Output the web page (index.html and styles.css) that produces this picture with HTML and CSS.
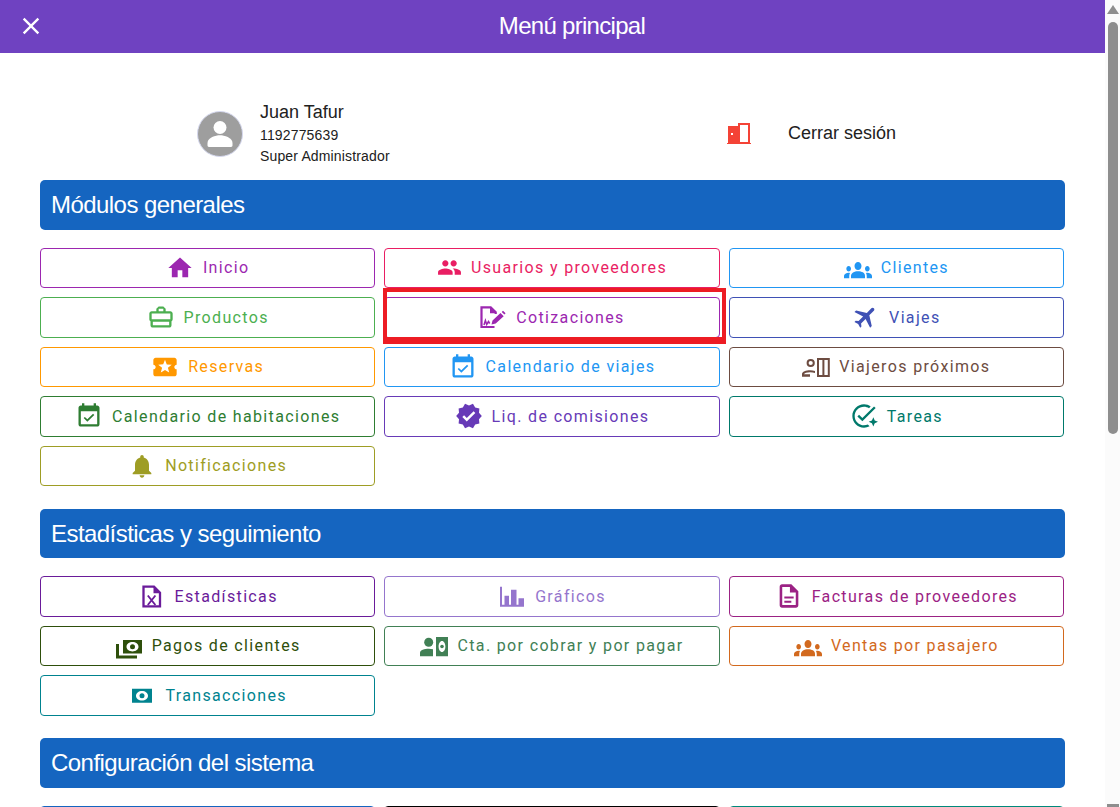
FILE: index.html
```html
<!DOCTYPE html>
<html lang="es">
<head>
<meta charset="utf-8">
<title>Menú principal</title>
<link rel="stylesheet" href="styles.css">
</head>
<body>
<div class="app">
  <div class="main">
    <header class="topbar">
      <svg class="close" viewBox="0 0 24 24"><path d="M19 6.41L17.59 5 12 10.59 6.41 5 5 6.41 10.59 12 5 17.59 6.41 19 12 13.41 17.59 19 19 17.59 13.41 12z"/></svg>
      <h1 class="topbar-title">Menú principal</h1>
    </header>
    <main class="content">
      <div class="account">
        <div class="profile">
          <svg class="avatar" viewBox="0 0 46 46"><circle cx="23" cy="23" r="22.5" fill="#9e9e9e" stroke="#d5d8ee"/><circle cx="23" cy="16.5" r="6.5" fill="#fff"/><path d="M10.5 34.5v-2.6c0-5.2 8.3-7.6 12.5-7.6s12.500 2.400 12.500 7.600v2.600c0 .8-.6 1.400-1.400 1.400H11.900c-.8 0-1.400-.6-1.400-1.400z" fill="#fff"/></svg>
          <div class="profile-text">
            <div class="profile-name">Juan Tafur</div>
            <div class="profile-line">1192775639</div>
            <div class="profile-line">Super Administrador</div>
          </div>
        </div>
        <div class="logout">
          <svg class="door" viewBox="0 0 24 21"><path fill="#f44336" d="M1 3h11v18H0v-1h1zm3 7v2h2v-2z" fill-rule="evenodd"/><path fill="#f44336" d="M11 0h12v20h1v1H11zm2 2v17h8V2z" fill-rule="evenodd"/></svg>
          <span class="logout-label">Cerrar sesión</span>
        </div>
      </div>

      <section class="section">
        <h2 class="section-title">Módulos generales</h2>
        <div class="grid">
          <a class="btn c-inicio"><svg class="ico" viewBox="0 0 24 24"><path d="M10 20v-6h4v6h5v-8h3L12 3 2 12h3v8z"/></svg><span>Inicio</span></a>
          <a class="btn c-usuarios"><svg class="ico ico-sm" viewBox="0 0 24 24"><path d="M16 11c1.660 0 2.990-1.340 2.990-3S17.660 5 16 5c-1.660 0-3 1.340-3 3s1.340 3 3 3zm-8 0c1.660 0 2.990-1.340 2.990-3S9.660 5 8 5C6.340 5 5 6.340 5 8s1.340 3 3 3zm0 2c-2.330 0-7 1.170-7 3.500V19h14v-2.500c0-2.330-4.670-3.500-7-3.500zm8 0c-.29 0-.62.02-.97.05 1.160.84 1.970 1.970 1.970 3.450V19h6v-2.500c0-2.330-4.670-3.500-7-3.500z"/></svg><span>Usuarios y proveedores</span></a>
          <a class="btn c-clientes"><svg class="ico" viewBox="0 0.2 24 20.5" preserveAspectRatio="none"><path d="M12 12.750c1.630 0 3.070.39 4.240.9 1.080.48 1.760 1.560 1.760 2.730V18H6v-1.610c0-1.180.68-2.260 1.760-2.730 1.170-.52 2.610-.91 4.240-.91zM4 13c1.100 0 2-.9 2-2s-.9-2-2-2-2 .9-2 2 .9 2 2 2zm1.130 1.100c-.37-.06-.74-.1-1.130-.1-.99 0-1.930.21-2.780.58C.48 14.900 0 15.620 0 16.430V18h4.500v-1.610c0-.83.23-1.610.63-2.290zM20 13c1.100 0 2-.9 2-2s-.9-2-2-2-2 .9-2 2 .9 2 2 2zm4 3.430c0-.81-.48-1.530-1.220-1.850-.85-.37-1.790-.58-2.780-.58-.39 0-.76.04-1.130.1.4.68.63 1.460.63 2.290V18H24v-1.570zM12 6c1.660 0 3 1.340 3 3s-1.340 3-3 3-3-1.340-3-3 1.340-3 3-3z"/></svg><span>Clientes</span></a>

          <a class="btn c-productos"><svg class="ico" viewBox="0 0 24 24"><path d="M20 7h-4V5l-2-2h-4L8 5v2H4c-1.100 0-2 .9-2 2v5c0 .75.4 1.380 1 1.730V19c0 1.110.89 2 2 2h14c1.110 0 2-.89 2-2v-3.280c.59-.35 1-.99 1-1.720V9c0-1.100-.9-2-2-2zM10 5h4v2h-4V5zM4 9h16v5H4V9zm15 10H5v-3h14v3z"/></svg><span>Productos</span></a>
          <a class="btn c-cotiz"><svg class="ico" viewBox="0 0 28 28"><path d="M15.500 24H2.500V4.300h9.200l5 5V11" fill="none" stroke="currentColor" stroke-width="2.200"/><path d="M11 3.800l6.500 6.500H11z"/><path d="M5 22l1.400-4.500 1.300 4 1.800-3 1.200 2" fill="none" stroke="currentColor" stroke-width="1.500"/><path d="M12.500 21.500l1-4 8-7.500 3.200 3.200-8 7.300zM22.700 8.900l1.300-1.200 2.600 2.600-1.200 1.300z"/></svg><span>Cotizaciones</span></a>
          <a class="btn c-viajes"><svg class="ico" viewBox="0 0 24 24"><path transform="rotate(45 12 12)" d="M21 16v-2l-8-5V3.500c0-.83-.67-1.500-1.500-1.500S10 2.670 10 3.500V9l-8 5v2l8-2.500V19l-2 1.500V22l3.500-1 3.500 1v-1.500L13 19v-5.500l8 2.500z"/></svg><span>Viajes</span></a>

          <a class="btn c-reservas"><svg class="ico" viewBox="0 0 24 24"><path d="M20 12c0-1.100.9-2 2-2V6c0-1.100-.9-2-2-2H4c-1.100 0-1.990.9-1.990 2v4c1.100 0 1.990.9 1.990 2s-.89 2-2 2v4c0 1.100.9 2 2 2h16c1.100 0 2-.9 2-2v-4c-1.100 0-2-.9-2-2zm-4.420 4.800L12 14.500l-3.580 2.300 1.080-4.120-3.290-2.690 4.240-.25L12 5.800l1.540 3.950 4.240.25-3.290 2.690 1.090 4.110z"/></svg><span>Reservas</span></a>
          <a class="btn c-calviajes"><svg class="ico" viewBox="0 0 24 24"><path d="M16.530 11.060L15.470 10l-4.880 4.880-2.120-2.120-1.060 1.060L10.590 17l5.940-5.940zM19 3h-1V1h-2v2H8V1H6v2H5c-1.110 0-1.990.9-1.990 2L3 19c0 1.100.89 2 2 2h14c1.100 0 2-.9 2-2V5c0-1.100-.9-2-2-2zm0 16H5V8h14v11z"/></svg><span>Calendario de viajes</span></a>
          <a class="btn c-viajeros"><svg class="ico" viewBox="0 0 28 28"><circle cx="8.700" cy="10" r="3.100" fill="none" stroke="currentColor" stroke-width="2"/><path d="M0 23.700v-2.700c0-2.500 4-3.800 8-3.800 1.800 0 3.500.3 5 .9v2c-1.500-.6-3.200-.9-5-.9-3 0-5.800.8-6 2h6v2.500z"/><path d="M16 6h10.800v17H16zM21.400 6v17" fill="none" stroke="currentColor" stroke-width="2"/></svg><span>Viajeros próximos</span></a>

          <a class="btn c-calhab"><svg class="ico" viewBox="0 0 24 24"><path d="M16.530 11.060L15.470 10l-4.880 4.880-2.120-2.120-1.060 1.060L10.590 17l5.940-5.940zM19 3h-1V1h-2v2H8V1H6v2H5c-1.110 0-1.990.9-1.990 2L3 19c0 1.100.89 2 2 2h14c1.100 0 2-.9 2-2V5c0-1.100-.9-2-2-2zm0 16H5V8h14v11z"/></svg><span>Calendario de habitaciones</span></a>
          <a class="btn c-liq"><svg class="ico" viewBox="0 0 24 24"><path d="M23 12l-2.440-2.790.34-3.690-3.610-.82-1.890-3.200L12 2.960 8.600 1.500 6.710 4.690 3.100 5.500l.34 3.700L1 12l2.440 2.790-.34 3.700 3.610.82L8.600 22.500l3.400-1.470 3.400 1.460 1.890-3.190 3.610-.82-.34-3.690L23 12zm-12.910 4.720l-3.800-3.810 1.480-1.480 2.320 2.330 5.850-5.870 1.480 1.480-7.330 7.350z"/></svg><span>Liq. de comisiones</span></a>
          <a class="btn c-tareas"><svg class="ico" viewBox="0 0 24 24"><path d="M22 5.180L10.590 16.600l-4.240-4.240 1.410-1.410 2.830 2.830 10-10L22 5.180zM12 20c-4.410 0-8-3.590-8-8s3.590-8 8-8c1.570 0 3.040.46 4.280 1.250l1.450-1.450C16.100 2.670 14.130 2 12 2 6.480 2 2 6.480 2 12s4.480 10 10 10c1.730 0 3.360-.44 4.780-1.220l-1.500-1.500c-1 .46-2.110.72-3.280.72z"/><path d="M20 13l1.200 2.800L24 17l-2.800 1.200L20 21l-1.200-2.800L16 17l2.800-1.200z"/></svg><span>Tareas</span></a>

          <a class="btn c-notif"><svg class="ico" viewBox="0 0 24 24"><path d="M12 22c1.100 0 2-.9 2-2h-4c0 1.100.9 2 2 2zm6-6v-5c0-3.070-1.630-5.640-4.500-6.320V4c0-.83-.67-1.500-1.500-1.500s-1.500.67-1.500 1.500v.68C7.640 5.360 6 7.920 6 11v5l-2 2v1h16v-1l-2-2z"/></svg><span>Notificaciones</span></a>
        </div>
      </section>

      <section class="section">
        <h2 class="section-title">Estadísticas y seguimiento</h2>
        <div class="grid">
          <a class="btn c-estad"><svg class="ico" viewBox="0 0 28 28"><path d="M5.500 4.700H16l6 6v13.600H5.500z" fill="none" stroke="currentColor" stroke-width="2.300"/><path d="M15.500 4.500l6.700 6.700h-6.700z"/><path d="M9.800 13.500l7.600 9.500M17.400 13.500L9.800 23" fill="none" stroke="currentColor" stroke-width="1.900"/></svg><span>Estadísticas</span></a>
          <a class="btn c-graf"><svg class="ico" viewBox="0 0 28 28"><path d="M2 4.700h2v18h2.500v-9H11v9h2v-15h5.500v15h2v-6.500H26v8.500H2z"/></svg><span>Gráficos</span></a>
          <a class="btn c-fact"><svg class="ico" viewBox="0 0 24 24"><path d="M8 16h6v1.700H8zm0-3.500h8v1.700H8zM14 2H6c-1.100 0-2 .9-2 2v16c0 1.100.89 2 1.990 2H18c1.100 0 2-.9 2-2V8l-6-6zm3.800 17.800H6.200V4.200h6.600V9h5z" fill-rule="evenodd"/></svg><span>Facturas de proveedores</span></a>

          <a class="btn c-pagos"><svg class="ico" viewBox="0 0 28 28"><path d="M8 8h19v13.500H8zm9.500 2c-3.300 0-6 2.100-6 4.700s2.700 4.700 6 4.700 6-2.100 6-4.700-2.700-4.700-6-4.700z" fill-rule="evenodd"/><circle cx="17.500" cy="14.700" r="2.500"/><path d="M1 12h3v11.500h18v3H1z"/></svg><span>Pagos de clientes</span></a>
          <a class="btn c-cta"><svg class="ico" viewBox="0 0 28 28"><circle cx="8.700" cy="10.300" r="4.500"/><path d="M0 24.300v-3.600c0-2.700 4.500-4 8.700-4 1.500 0 3 .2 4.300.5v7.100z"/><path d="M16 5h12v19.300H16zm6 4c-1.900 0-3.400 2.500-3.400 5.500s1.500 5.500 3.400 5.500 3.400-2.500 3.400-5.500S23.900 9 22 9z" fill-rule="evenodd"/><circle cx="22" cy="14.500" r="1.800"/></svg><span>Cta. por cobrar y por pagar</span></a>
          <a class="btn c-ventas"><svg class="ico" viewBox="0 0.2 24 20.5" preserveAspectRatio="none"><path d="M12 12.750c1.630 0 3.070.39 4.240.9 1.080.48 1.760 1.560 1.760 2.730V18H6v-1.610c0-1.180.68-2.260 1.760-2.730 1.170-.52 2.610-.91 4.240-.91zM4 13c1.100 0 2-.9 2-2s-.9-2-2-2-2 .9-2 2 .9 2 2 2zm1.130 1.100c-.37-.06-.74-.1-1.130-.1-.99 0-1.930.21-2.780.58C.48 14.900 0 15.620 0 16.430V18h4.500v-1.610c0-.83.23-1.610.63-2.290zM20 13c1.100 0 2-.9 2-2s-.9-2-2-2-2 .9-2 2 .9 2 2 2zm4 3.430c0-.81-.48-1.530-1.220-1.850-.85-.37-1.790-.58-2.780-.58-.39 0-.76.04-1.130.1.4.68.63 1.460.63 2.290V18H24v-1.570zM12 6c1.660 0 3 1.340 3 3s-1.340 3-3 3-3-1.340-3-3 1.340-3 3-3z"/></svg><span>Ventas por pasajero</span></a>

          <a class="btn c-trans"><svg class="ico" viewBox="0 0 28 28"><path d="M4 7.800h20v14H4zm10 2.200c-3.300 0-6 2.100-6 4.800s2.700 4.800 6 4.800 6-2.100 6-4.800-2.700-4.800-6-4.800z" fill-rule="evenodd"/><circle cx="14" cy="14.800" r="2.500"/></svg><span>Transacciones</span></a>
        </div>
      </section>

      <section class="section">
        <h2 class="section-title">Configuración del sistema</h2>
        <div class="grid">
          <a class="btn c-conf1"></a>
          <a class="btn c-conf2"></a>
          <a class="btn c-conf3"></a>
        </div>
      </section>
    </main>
  </div>
  <div class="scrollbar">
    <div class="arrow-up"></div>
    <div class="thumb"></div>
    <div class="arrow-down"></div>
  </div>
</div>
</body>
</html>
```
FILE: styles.css
```css
html, body { margin: 0; height: 100%; overflow: hidden; background: #fff; }
.app { display: flex; height: 807px; overflow: hidden; font-family: "Liberation Sans", Arial, sans-serif; color: #212121; }
.main { width: 1105px; flex: none; overflow: hidden; }

.topbar { display: flex; align-items: center; height: 53px; padding-bottom: 2px; box-sizing: border-box; background: #6f42c1; color: #fff; }
.close { width: 28px; height: 28px; margin-left: 16.5px; margin-right: -5.5px; fill: #fff; flex: none; }
.topbar-title { flex: 1; margin: 0; text-align: center; font-size: 24px; font-weight: 400; letter-spacing: -0.7px; }

.content { padding: 0 40px; }
.account { display: flex; align-items: center; height: 127px; padding-top: 35px; box-sizing: border-box; }
.profile { display: flex; align-items: center; width: 687px; padding-left: 157px; box-sizing: border-box; }
.avatar { width: 46px; height: 46px; margin-right: 17px; flex: none; }
.profile-name { font-size: 18px; line-height: 21px; margin-bottom: 2px; }
.profile-line { font-size: 14px; line-height: 21px; letter-spacing: 0.15px; }
.logout { display: flex; align-items: center; margin-top: -2px; }
.door { width: 24px; height: 21px; margin-right: 37px; }
.logout-label { font-size: 18px; }

.section { margin-bottom: 22.5px; }
.section-title { margin: 0 0 18px; height: 49.5px; line-height: 49.5px; padding-left: 11px; background: #1565c0; color: #fff; border-radius: 5px; font-size: 24px; font-weight: 400; letter-spacing: -0.55px; }

.grid { display: grid; grid-template-columns: repeat(3, 1fr); gap: 9px; padding-right: 1px; }
.btn { position: relative; display: flex; align-items: center; justify-content: center; gap: 9px; height: 40.5px; box-sizing: border-box; border: 1px solid currentColor; border-radius: 4px; font-family: Roboto, "Liberation Sans", sans-serif; font-size: 16px; letter-spacing: 1.35px; white-space: nowrap; }
.ico { width: 28px; height: 28px; flex: none; fill: currentColor; }
.ico-sm { width: 25px; height: 25px; }

.c-inicio { color: #9c27b0; }
.c-usuarios { color: #e91e63; }
.c-clientes { color: #2196f3; }
.c-productos { color: #4caf50; }
.c-cotiz { color: #9c27b0; }
.c-viajes { color: #3f51b5; }
.c-reservas { color: #ff9800; }
.c-calviajes { color: #2196f3; }
.c-viajeros { color: #6d4c41; }
.c-calhab { color: #2e7d32; }
.c-liq { color: #673ab7; }
.c-tareas { color: #00796b; }
.c-notif { color: #9e9d24; }
.c-estad { color: #6a1b9a; }
.c-graf { color: #9575cd; }
.c-fact { color: #9b2284; }
.c-pagos { color: #2e4f0b; }
.c-cta { color: #418055; }
.c-ventas { color: #d2691e; }
.c-trans { color: #00838f; }
.c-conf1 { color: #1565c0; }
.c-conf2 { color: #000; }
.c-conf3 { color: #00897b; }

/* Annotation drawn over the Cotizaciones button */
.c-cotiz::after { content: ""; position: absolute; left: -2.300px; top: -10.300px; right: -7px; bottom: -7px; border-style: solid; border-color: #ed1c24; border-width: 4.500px 4px 7px 4.500px; pointer-events: none; }

.scrollbar { width: 15px; flex: none; display: flex; flex-direction: column; align-items: center; background: #fbfbfb; }
.arrow-up { width: 0; height: 0; margin-top: 5px; border-left: 6px solid transparent; border-right: 6px solid transparent; border-bottom: 9px solid #8e8e8e; }
.thumb { width: 10px; height: 412px; margin-top: 8px; background: #8e8e8e; border-radius: 5px; }
.arrow-down { width: 12px; height: 3px; margin-top: auto; background: #8e8e8e; }
```
